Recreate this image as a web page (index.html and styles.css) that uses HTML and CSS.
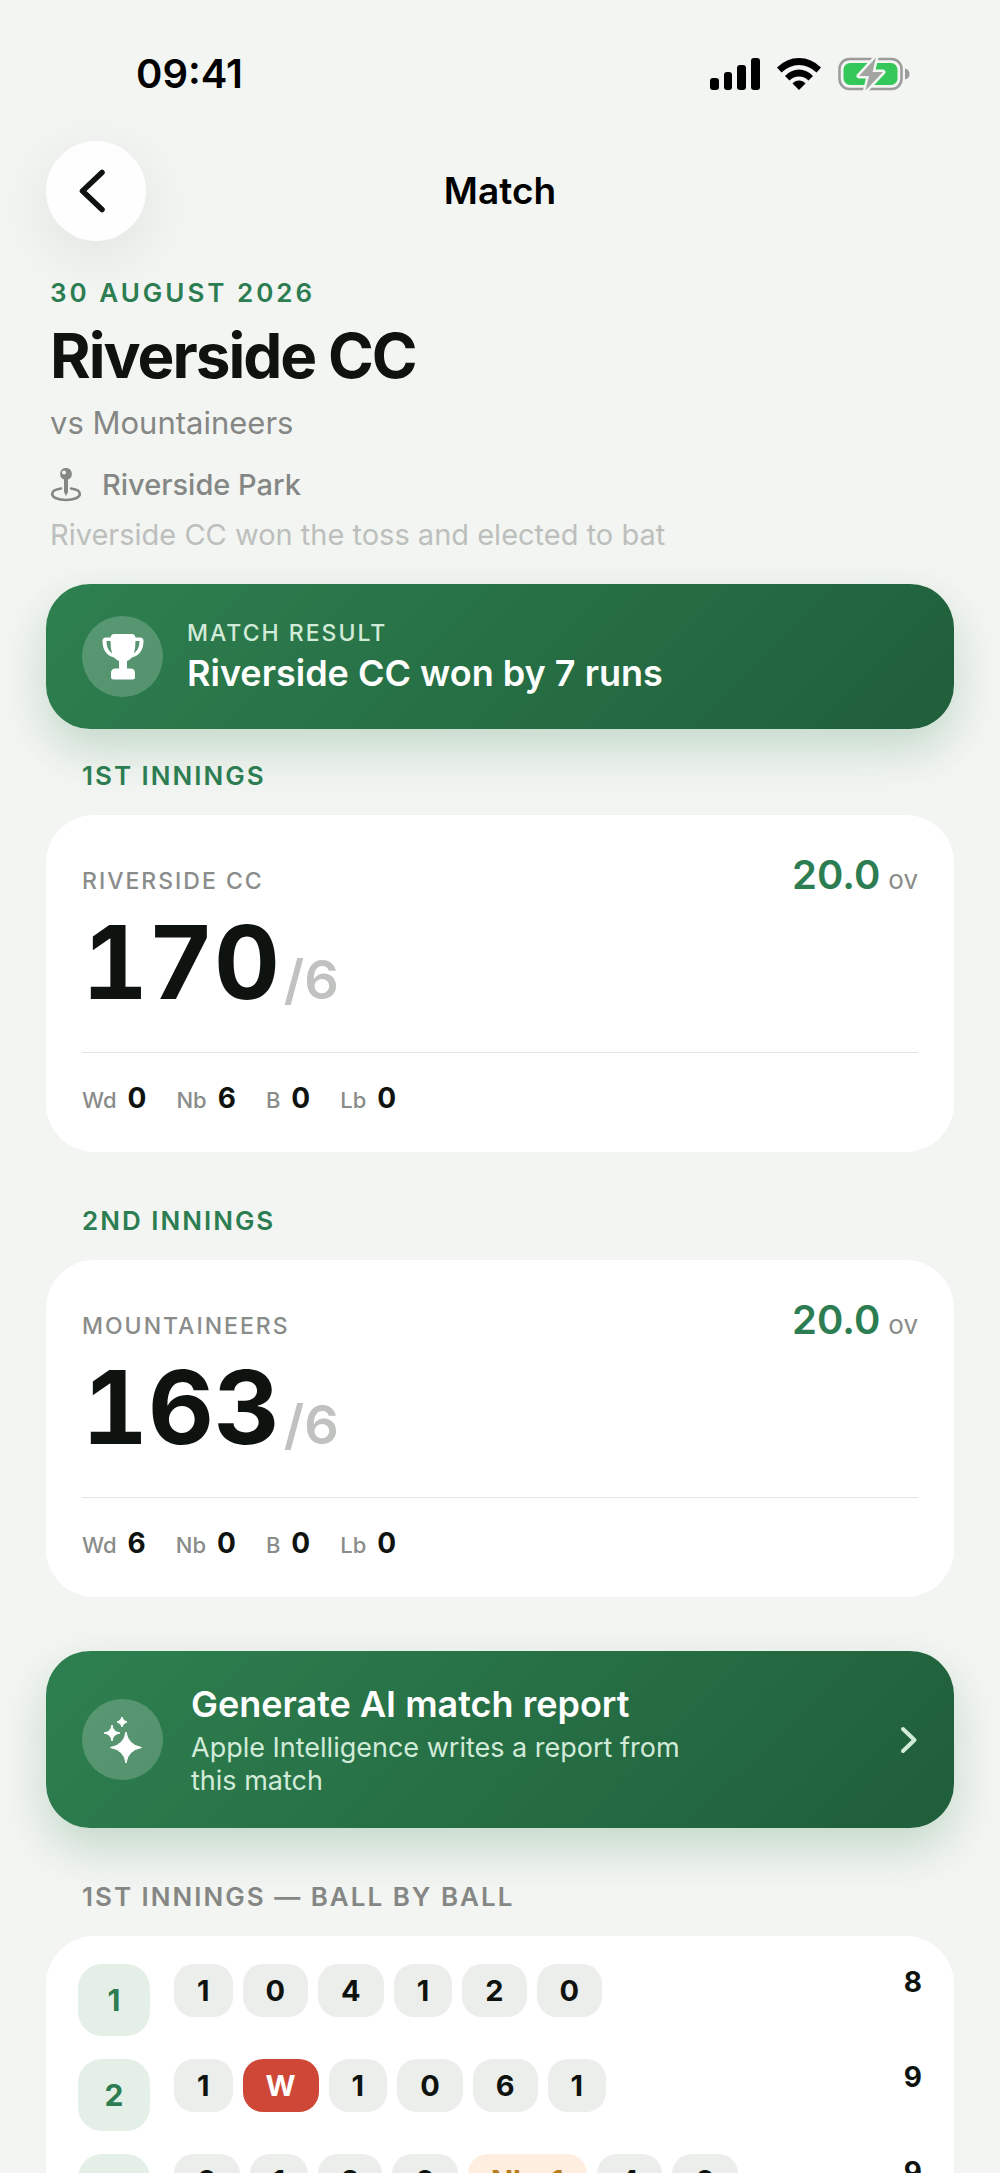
FILE: index.html
```html
<!DOCTYPE html>
<html lang="en">
<head>
<meta charset="utf-8">
<meta name="viewport" content="width=device-width, initial-scale=1">
<title>Match</title>
<link rel="stylesheet" href="styles.css">
</head>
<body>
<div class="screen">
  <div class="status">
    <span class="time">09:41</span>
    <span class="status-icons">
      <svg class="signal" viewBox="0 0 50 32" width="50" height="32" aria-hidden="true"><rect x="0" y="20" width="9" height="12" rx="3"/><rect x="14" y="14" width="8" height="18" rx="3"/><rect x="27" y="7" width="9" height="25" rx="3"/><rect x="41" y="0" width="9" height="32" rx="3"/></svg>
      <svg class="wifi" viewBox="0 0 44 32" width="44" height="32" aria-hidden="true"><path d="M0 9.500Q9.500 0 22 0T44 9.500L39.500 14.500Q31.500 7 22 7T4.500 14.500Z"/><path d="M8 18Q14 11.500 22 11.500T36 18L31.500 22.500Q27.500 18.500 22 18.500T12.500 22.500Z"/><path d="M15.500 25.500Q18 22.500 22 22.500T28.500 25.500L22 32Z"/></svg>
      <svg class="battery" viewBox="0 0 72 34" width="72" height="34" aria-hidden="true"><rect x="1.500" y="2" width="62" height="30" rx="10" fill="none" stroke="#9a9b9a" stroke-width="2.500"/><rect x="5.500" y="6" width="54" height="22" rx="6.500" fill="#34c759"/><path d="M67 11.500Q71.500 12.500 71.500 17T67 22.500Z" fill="#9a9b9a"/><path d="M38 .5 21 19H31L27.500 33.500 45 15H34.500Z" fill="#a3a5a3" stroke="#f3f5f2" stroke-width="5" stroke-linejoin="round" paint-order="stroke"/></svg>
    </span>
  </div>

  <header class="nav">
    <button class="back" type="button" aria-label="Back"><svg viewBox="0 0 28 44" width="28" height="44" aria-hidden="true"><path d="M24 3.500 4.500 22 24 40.500" fill="none" stroke="currentColor" stroke-width="5.500" stroke-linecap="round" stroke-linejoin="round"/></svg></button>
    <h1 class="nav-title">Match</h1>
  </header>

  <main>
    <section class="intro">
      <p class="date">30 AUGUST 2026</p>
      <h2 class="team">Riverside CC</h2>
      <p class="opponent">vs Mountaineers</p>
      <p class="venue"><svg viewBox="0 0 32 34" width="32" height="34" aria-hidden="true"><path fill="currentColor" fill-rule="evenodd" d="M16 0a6 6 0 0 1 2 11.600V24L16 28 14 24V11.600A6 6 0 0 1 16 0ZM14 2.500a2 2 0 1 0 .01 4 2 2 0 0 0-.01-4Z"/><path d="M11 20.500C5 21.300 2.200 23.500 2.200 26c0 3.500 5.800 6 13.800 6s13.800-2.500 13.800-6c0-2.500-2.800-4.700-8.800-5.500" fill="none" stroke="currentColor" stroke-width="2.600" stroke-linecap="round"/></svg>Riverside Park</p>
      <p class="toss">Riverside CC won the toss and elected to bat</p>
    </section>

    <section class="banner result">
      <span class="badge"><svg viewBox="0 0 42 46" width="42" height="46" aria-hidden="true"><path fill="currentColor" fill-rule="evenodd" d="M12 0H30Q33 0 33.500 3.500H38Q41.500 3.500 41.500 7C41.500 15 38 21.500 30 23.500Q27.500 26 25 27V34.500H28.500Q33 34.500 33 39V43Q33 45.500 30.500 45.500H11.500Q9 45.500 9 43V39Q9 34.500 13.500 34.500H17V27Q14.500 26 12 23.500C4 21.500 .5 15 .5 7Q.5 3.500 4 3.500H8.500Q9 0 12 0ZM8.500 7H4.500C4.500 12.500 6.500 17 10 19Q8.500 14 8.500 7ZM33.500 7Q33.500 14 32 19C35.500 17 37.500 12.500 37.500 7Z"/></svg></span>
      <div>
        <p class="result-label">MATCH RESULT</p>
        <p class="banner-title">Riverside CC won by 7 runs</p>
      </div>
    </section>

    <h3 class="section-label">1ST INNINGS</h3>
    <section class="card innings">
      <div class="innings-head"><span class="innings-team">RIVERSIDE CC</span><span class="overs">20.0<small>ov</small></span></div>
      <p class="score">170<span class="wickets">/6</span></p>
      <dl class="extras">
        <div><dt>Wd</dt><dd>0</dd></div>
        <div><dt>Nb</dt><dd>6</dd></div>
        <div><dt>B</dt><dd>0</dd></div>
        <div><dt>Lb</dt><dd>0</dd></div>
      </dl>
    </section>

    <h3 class="section-label">2ND INNINGS</h3>
    <section class="card innings">
      <div class="innings-head"><span class="innings-team">MOUNTAINEERS</span><span class="overs">20.0<small>ov</small></span></div>
      <p class="score">163<span class="wickets">/6</span></p>
      <dl class="extras">
        <div><dt>Wd</dt><dd>6</dd></div>
        <div><dt>Nb</dt><dd>0</dd></div>
        <div><dt>B</dt><dd>0</dd></div>
        <div><dt>Lb</dt><dd>0</dd></div>
      </dl>
    </section>

    <button class="banner report" type="button">
      <span class="badge"><svg viewBox="0 0 40 48" width="40" height="48" aria-hidden="true"><g fill="currentColor" stroke="currentColor" stroke-width="1" stroke-linejoin="round"><path d="M23 16Q25 29 38.500 31.500 25 34 23 47 21 34 7.500 31.500 21 29 23 16Z"/><path d="M9 9Q10 16 17 17 10 18 9 25 8 18 1 17 8 16 9 9Z"/><path d="M19 1Q19.700 5 24 6 19.700 7 19 11 18.300 7 14 6 18.300 5 19 1Z"/></g></svg></span>
      <span class="report-text">
        <span class="banner-title">Generate AI match report</span>
        <span class="report-note">Apple Intelligence writes a report from this match</span>
      </span>
      <svg class="chevron" viewBox="0 0 18 28" width="18" height="28" aria-hidden="true"><path d="M3 3 14.500 14 3 25" fill="none" stroke="currentColor" stroke-width="4" stroke-linecap="round" stroke-linejoin="round"/></svg>
    </button>

    <h3 class="section-label muted">1ST INNINGS — BALL BY BALL</h3>
    <ol class="card over-list">
      <li class="over"><span class="over-no">1</span><span class="balls"><span class="ball">1</span><span class="ball">0</span><span class="ball">4</span><span class="ball">1</span><span class="ball">2</span><span class="ball">0</span></span><span class="runs">8</span></li>
      <li class="over"><span class="over-no">2</span><span class="balls"><span class="ball">1</span><span class="ball wicket">W</span><span class="ball">1</span><span class="ball">0</span><span class="ball">6</span><span class="ball">1</span></span><span class="runs">9</span></li>
      <li class="over"><span class="over-no">3</span><span class="balls"><span class="ball">0</span><span class="ball">1</span><span class="ball">2</span><span class="ball">0</span><span class="ball extra">Nb+1</span><span class="ball">4</span><span class="ball">0</span></span><span class="runs">9</span></li>
    </ol>
  </main>
</div>
</body>
</html>
```
FILE: styles.css
```css
* { box-sizing: border-box; margin: 0; padding: 0; }

body {
  background: #f3f5f2;
  color: #0f130f;
  font-family: Inter, "Liberation Sans", sans-serif;
}

button { border: 0; font: inherit; color: inherit; text-align: left; cursor: pointer; }
svg { display: block; flex: none; }

.screen { height: 100vh; overflow: hidden; padding: 0 46px; }

/* Status bar */
.status {
  display: flex;
  justify-content: space-between;
  align-items: center;
  padding: 50px 44px 43px 90px;
  color: #000;
}
.time { font-size: 40px; line-height: 48px; font-weight: 600; }
.status-icons { display: flex; align-items: center; gap: 17px; }

/* Navigation */
.nav {
  display: grid;
  grid-template-columns: 100px 1fr 100px;
  align-items: center;
}
.back {
  display: grid;
  place-items: center;
  width: 100px;
  height: 100px;
  padding-right: 8px;
  border-radius: 50%;
  background: #fdfefd;
  box-shadow: 0 16px 64px rgba(0, 0, 0, .08);
}
.nav-title { font-size: 37px; line-height: 44px; font-weight: 600; text-align: center; color: #000; }

/* Match header */
.intro { padding: 37px 4px 33px; }
.date { font-size: 26px; line-height: 30px; font-weight: 600; letter-spacing: 3px; color: #2d7d52; }
.team { margin-top: 10px; font-size: 62px; line-height: 76px; font-weight: 700; letter-spacing: -2px; }
.opponent { margin-top: 9px; font-size: 31px; line-height: 40px; color: #858785; }
.venue {
  display: flex;
  align-items: center;
  gap: 20px;
  margin-top: 22px;
  font-size: 29px;
  line-height: 40px;
  font-weight: 500;
  color: #858785;
}
.toss { margin-top: 14px; font-size: 29px; line-height: 32px; color: #bcbfbc; }

/* Green banners */
.banner {
  display: flex;
  align-items: center;
  width: 100%;
  padding: 31px 36px;
  border-radius: 44px;
  background: linear-gradient(135deg, #2e8050, #1f5e3a);
  box-shadow: 0 20px 46px rgba(46, 128, 80, .24);
  color: #fff;
}
.result { gap: 24px; padding: 32px 36px; }
.report { gap: 28px; margin-top: 54px; }
.badge {
  display: grid;
  place-items: center;
  flex: none;
  width: 81px;
  height: 81px;
  border-radius: 50%;
  background: rgba(255, 255, 255, .2);
}
.result-label { margin-bottom: 4px; font-size: 23px; line-height: 28px; font-weight: 500; letter-spacing: 2px; color: #d2ebd9; }
.banner-title { display: block; font-size: 36px; line-height: 44px; font-weight: 600; }
.report-text { flex: 1; padding-right: 172px; }
.report-note { display: block; margin-top: 5px; font-size: 27px; line-height: 33px; color: #d2ebd9; }
.chevron { color: #d2ebd9; }

/* Cards */
.section-label {
  margin: 54px 36px 24px;
  font-size: 26px;
  line-height: 30px;
  font-weight: 600;
  letter-spacing: 2px;
  color: #2d7d52;
}
.result + .section-label { margin-top: 32px; }
.muted { color: #858785; }
.card { border-radius: 48px; background: #fff; }

.innings { padding: 36px; }
.innings-head { display: flex; justify-content: space-between; align-items: baseline; }
.innings-team { font-size: 23px; line-height: 28px; font-weight: 500; letter-spacing: 2px; color: #8a8c8a; }
.overs { display: flex; align-items: baseline; gap: 8px; font-size: 40px; line-height: 48px; font-weight: 600; color: #2d7d52; }
.overs small { font-size: 26px; line-height: 30px; font-weight: 400; color: #8a8c8a; }
.score { margin-top: 7px; font-size: 102px; line-height: 112px; font-weight: 700; font-variant-numeric: tabular-nums; }
.wickets { margin-left: 4px; font-size: 54px; line-height: 60px; font-weight: 600; font-variant-numeric: normal; color: #c0c2c0; }
.extras {
  display: flex;
  gap: 30px;
  margin-top: 34px;
  padding-top: 27px;
  border-top: 1px solid #e4e6e4;
}
.extras div { display: flex; align-items: baseline; gap: 11px; }
.extras dt { font-size: 22px; line-height: 28px; font-weight: 500; color: #8a8c8a; }
.extras dd { font-size: 28px; line-height: 36px; font-weight: 700; }

/* Ball by ball */
.over-list { display: grid; gap: 23px; padding: 28px 32px; list-style: none; }
.over { display: flex; align-items: flex-start; gap: 24px; }
.over-no {
  flex: none;
  width: 72px;
  border-radius: 24px;
  background: #e4efe7;
  color: #2d7d52;
  font-size: 30px;
  line-height: 72px;
  font-weight: 700;
  text-align: center;
}
.balls { display: flex; flex: 1; flex-wrap: wrap; gap: 10px; }
.ball {
  padding: 0 23px;
  border-radius: 20px;
  background: #ebeeea;
  font-size: 29px;
  line-height: 53px;
  font-weight: 700;
}
.wicket { background: #cf4837; color: #fff; }
.extra { background: #fdeee0; color: #b87a1a; }
.runs { font-size: 28px; line-height: 36px; font-weight: 700; }
```
